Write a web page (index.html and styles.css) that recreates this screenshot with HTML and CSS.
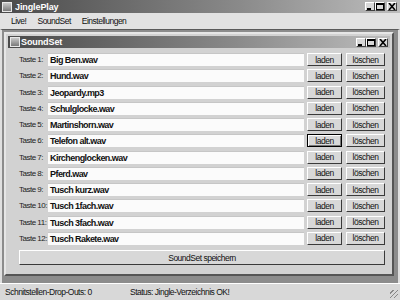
FILE: index.html
```html
<!DOCTYPE html>
<html>
<head>
<meta charset="utf-8">
<title>JinglePlay</title>
<link rel="stylesheet" href="styles.css">
</head>
<body>
<div class="app">
  <div class="titlebar">
    <span class="appicon"></span>
    <span class="title">JinglePlay</span>
    <div class="winbtns">
      <span class="wb"><svg width="8" height="7" viewBox="0 0 8 7"><rect x="1" y="5" width="4" height="2" fill="#000"/></svg></span>
      <span class="wb"><svg width="8" height="7" viewBox="0 0 8 7"><rect x="0.5" y="0.5" width="7" height="6" fill="none" stroke="#000"/><rect x="0" y="0" width="8" height="2" fill="#000"/></svg></span>
      <span class="wb gap"><svg width="8" height="7" viewBox="0 0 8 7"><path d="M1 0 L7 7 M7 0 L1 7" stroke="#000" stroke-width="1.6"/></svg></span>
    </div>
  </div>
  <div class="menubar">
    <span>Live!</span>
    <span>SoundSet</span>
    <span>Einstellungen</span>
  </div>
  <div class="mdi">
    <div class="child">
      <div class="titlebar small">
        <span class="appicon"></span>
        <span class="title">SoundSet</span>
        <div class="winbtns">
          <span class="wb"><svg width="8" height="7" viewBox="0 0 8 7"><rect x="1" y="5" width="4" height="2" fill="#000"/></svg></span>
          <span class="wb"><svg width="8" height="7" viewBox="0 0 8 7"><rect x="0.5" y="0.5" width="7" height="6" fill="none" stroke="#000"/><rect x="0" y="0" width="8" height="2" fill="#000"/></svg></span>
          <span class="wb gap"><svg width="8" height="7" viewBox="0 0 8 7"><path d="M1 0 L7 7 M7 0 L1 7" stroke="#000" stroke-width="1.6"/></svg></span>
        </div>
      </div>
      <div class="body">
        <div class="row"><span class="lbl">Taste 1:</span><div class="field">Big Ben.wav</div><button class="btn">laden</button><button class="btn del">löschen</button></div>
        <div class="row"><span class="lbl">Taste 2:</span><div class="field">Hund.wav</div><button class="btn">laden</button><button class="btn del">löschen</button></div>
        <div class="row"><span class="lbl">Taste 3:</span><div class="field">Jeopardy.mp3</div><button class="btn">laden</button><button class="btn del">löschen</button></div>
        <div class="row"><span class="lbl">Taste 4:</span><div class="field">Schulglocke.wav</div><button class="btn">laden</button><button class="btn del">löschen</button></div>
        <div class="row"><span class="lbl">Taste 5:</span><div class="field">Martinshorn.wav</div><button class="btn">laden</button><button class="btn del">löschen</button></div>
        <div class="row"><span class="lbl">Taste 6:</span><div class="field">Telefon alt.wav</div><button class="btn focus">laden</button><button class="btn del">löschen</button></div>
        <div class="row"><span class="lbl">Taste 7:</span><div class="field">Kirchenglocken.wav</div><button class="btn">laden</button><button class="btn del">löschen</button></div>
        <div class="row"><span class="lbl">Taste 8:</span><div class="field">Pferd.wav</div><button class="btn">laden</button><button class="btn del">löschen</button></div>
        <div class="row"><span class="lbl">Taste 9:</span><div class="field">Tusch kurz.wav</div><button class="btn">laden</button><button class="btn del">löschen</button></div>
        <div class="row"><span class="lbl">Taste 10:</span><div class="field">Tusch 1fach.wav</div><button class="btn">laden</button><button class="btn del">löschen</button></div>
        <div class="row"><span class="lbl">Taste 11:</span><div class="field">Tusch 3fach.wav</div><button class="btn">laden</button><button class="btn del">löschen</button></div>
        <div class="row"><span class="lbl">Taste 12:</span><div class="field">Tusch Rakete.wav</div><button class="btn">laden</button><button class="btn del">löschen</button></div>
        <button class="btn save">SoundSet speichern</button>
      </div>
    </div>
  </div>
  <div class="statusbar">
    <span class="s1">Schnitstellen-Drop-Outs: 0</span>
    <span class="s2">Status: Jingle-Verzeichnis OK!</span>
    <span class="grip"></span>
  </div>
</div>
</body>
</html>
```

FILE: styles.css
```css
body{
margin:0;
font-family:"Liberation Sans","DejaVu Sans",sans-serif;
font-size:8.5px;
letter-spacing:-0.5px;
color:#111;
}
.app{
width:400px;
height:300px;
display:flex;
flex-direction:column;
background:#d6d6d6;
overflow:hidden;
}
.titlebar{
height:13px;
display:flex;
align-items:center;
padding:0 3px 0 2px;
background:linear-gradient(to right,#4a4a4a,#8a8a8a 60%,#bdbdbd);
color:#fff;
flex:none;
}
.appicon{
width:10px;
height:10px;
margin-right:3px;
background:linear-gradient(#c8c8c8,#7a7a7a);
border:1px solid #e8e8e8;
box-sizing:border-box;
}
.title{
font-weight:bold;
font-size:9px;
letter-spacing:-0.1px;
}
.winbtns{
margin-left:auto;
display:flex;
}
.wb{
width:10px;
height:9px;
background:#d8d8d8;
border:1px solid;
border-color:#fff #404040 #404040 #fff;
box-sizing:border-box;
display:flex;
align-items:center;
justify-content:center;
}
.wb.gap{margin-left:2px;}
.menubar{
height:16px;
display:flex;
align-items:center;
gap:11px;
padding-left:11px;
background:#e2e2e2;
flex:none;
}
.mdi{
flex:1;
background:#8c8c8c;
border-top:1px solid #5a5a5a;
border-left:2px solid #e0e0e0;
border-right:2px solid #e0e0e0;
padding:2px 4px 7px 2px;
}
.child{
height:100%;
box-sizing:border-box;
background:#d2d2d2;
border:2px solid;
border-color:#e6e6e6 #555 #555 #e6e6e6;
padding:2px 2px 0 2px;
display:flex;
flex-direction:column;
}
.titlebar.small{
height:12px;
padding:0 2px 0 2px;
}
.titlebar.small .appicon{margin-right:1px;}
.body{
flex:1;
padding:5px 4px 0 11px;
display:flex;
flex-direction:column;
gap:3.27px;
}
.row{
height:13px;
display:flex;
align-items:center;
}
.lbl{
width:29px;
flex:none;
white-space:nowrap;
font-size:8px;
letter-spacing:-0.5px;
color:#222;
}
.field{
width:256px;
height:13px;
box-sizing:border-box;
background:#fbfbfb;
border-top:1px solid #c6c6c6;
font-weight:bold;
font-size:9px;
letter-spacing:-0.55px;
line-height:12px;
padding-left:2px;
margin-right:3px;
}
.btn{
width:35px;
height:13px;
padding:0;
font:8.5px "Liberation Sans","DejaVu Sans",sans-serif;
letter-spacing:-0.5px;
color:#111;
background:#d8d8d8;
border:1px solid;
border-color:#fff #3a3a3a #3a3a3a #fff;
}
.btn.del{
width:39px;
margin-left:4px;
}
.btn.focus{
border-color:#000;
box-shadow:inset 1px 1px #fff,inset -1px -1px #777;
}
.btn.save{
width:366px;
height:15px;
margin-top:2px;
}
.statusbar{
height:16px;
display:flex;
align-items:center;
padding-left:5px;
border-top:1px solid #fff;
background:#d8d8d8;
flex:none;
position:relative;
}
.s1{width:125px;}
.grip{
position:absolute;
right:2px;
bottom:2px;
width:8px;
height:8px;
background:repeating-linear-gradient(135deg,transparent 0 2px,#888 2px 3px);
}
```
